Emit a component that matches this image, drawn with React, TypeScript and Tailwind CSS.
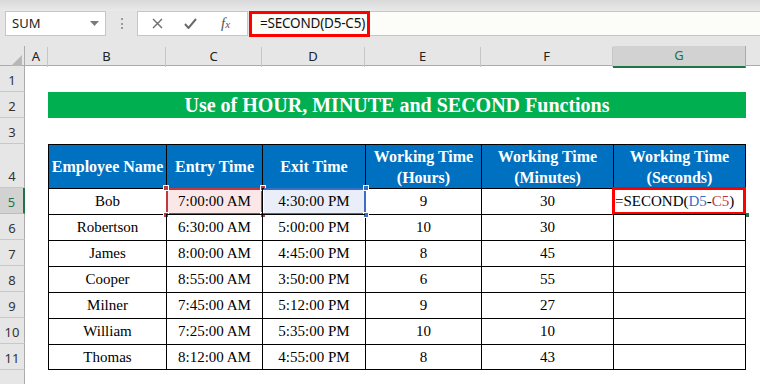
import React from "react";

const cols = "grid grid-cols-[25px_23px_118px_96px_103px_116px_132px_133px_14px]";
const ui = { fontFamily: '"Noto Sans", "Open Sans", sans-serif' };
const serif = { fontFamily: '"Liberation Serif", "Times New Roman", serif' };

const data = [
  ["Bob", "7:00:00 AM", "4:30:00 PM", "9", "30"],
  ["Robertson", "6:30:00 AM", "5:00:00 PM", "10", "30"],
  ["James", "8:00:00 AM", "4:45:00 PM", "8", "45"],
  ["Cooper", "8:55:00 AM", "3:50:00 PM", "6", "55"],
  ["Milner", "7:45:00 AM", "5:12:00 PM", "9", "27"],
  ["William", "7:25:00 AM", "5:35:00 PM", "10", "10"],
  ["Thomas", "8:12:00 AM", "4:55:00 PM", "8", "43"],
];

const RowHead = ({ n, active }: { n?: number; active?: boolean }) => (
  <div
    className={
      active
        ? "flex items-end justify-center pb-[1px] bg-[#d2d2d2] text-[#217346] border-b border-[#bdbdbd] border-r-2 border-r-[#217346] text-[13px]"
        : "flex items-end justify-center pb-[1px] bg-[#e6e6e6] text-[#333] border-b border-[#c8c8c8] border-r border-r-[#ababab] text-[13px]"
    }
    style={ui}
  >
    {n}
  </div>
);

const Handle = ({ pos, color }: { pos: string; color: string }) => (
  <span className={`absolute w-[6px] h-[6px] border border-white ${pos} ${color}`} />
);

const Toolbar = () => (
  <div className="h-[46px] bg-[#e6e6e6] relative" style={ui}>
    <div className="h-[11px] bg-gradient-to-b from-[#d9d9d9] to-[#e9e9e9]" />
    <div className="flex h-[25px] items-stretch">
      <div className="ml-[5px] w-[101px] bg-white border border-[#c6c6c6] flex items-center justify-between pl-[6px] pr-[6px] text-[13px] text-[#222]">
        <span>SUM</span>
        <svg width="9" height="5" viewBox="0 0 9 5">
          <path d="M0 0h9L4.5 5z" fill="#7a7a7a" />
        </svg>
      </div>
      <div className="w-[31px] flex flex-col items-center justify-center gap-[2.5px]">
        <span className="w-[2px] h-[2px] bg-[#9a9a9a]" />
        <span className="w-[2px] h-[2px] bg-[#9a9a9a]" />
        <span className="w-[2px] h-[2px] bg-[#9a9a9a]" />
      </div>
      <div className="w-[111px] bg-white border border-[#c6c6c6] flex items-center">
        <svg className="ml-[14px]" width="11" height="11" viewBox="0 0 11 11">
          <path d="M1 1l9 9M10 1l-9 9" stroke="#6b6b6b" strokeWidth="1.4" />
        </svg>
        <svg className="ml-[21px]" width="13" height="11" viewBox="0 0 13 11">
          <path d="M1 6l3.5 4L12 1" stroke="#6b6b6b" strokeWidth="2" fill="none" />
        </svg>
        <span className="ml-[24px] italic text-[15px] text-[#555] leading-none" style={serif}>
          f<span className="text-[11px]">x</span>
        </span>
      </div>
      <div className="flex-1 ml-[3px] bg-[#fcfcf8] border-y border-[#c6c6c6] relative">
        <div className="absolute left-[-2px] top-[-1px] w-[121px] h-[26px] border-[3px] border-[#ff0000]" />
        <div className="pl-[9px] h-full flex items-center text-[13.5px] tracking-[-0.2px] text-[#111]">=SECOND(D5-C5)</div>
      </div>
    </div>
  </div>
);

const ColHeads = () => {
  const letters = ["A", "B", "C", "D", "E", "F", "G"];
  return (
    <div className={`${cols} h-[20px] bg-[#e6e6e6] border-b border-[#ababab]`} style={ui}>
      <div className="relative border-r border-[#ababab]">
        <svg className="absolute right-[2px] bottom-[2px]" width="11" height="11" viewBox="0 0 11 11">
          <path d="M11 0v11H0z" fill="#b7b7b7" />
        </svg>
      </div>
      {letters.map((l) =>
        l === "G" ? (
          <div
            key={l}
            className="flex items-center justify-center bg-[#d2d2d2] text-[#217346] text-[13px] border-b-2 border-[#217346] border-r border-r-[#ababab]"
          >
            {l}
          </div>
        ) : (
          <div key={l} className="flex items-center justify-center text-[#222] text-[13px] border-r border-[#c6c6c6] my-[1px]">
            {l}
          </div>
        )
      )}
      <div />
    </div>
  );
};

export default function App() {
  const cellBase = "flex items-center justify-center border-l border-t border-black text-[15px] text-black leading-tight";
  return (
    <div className="w-[760px] h-[384px] overflow-hidden bg-white">
      <Toolbar />
      <ColHeads />

      {/* row 1 */}
      <div className={`${cols} h-[26px]`}>
        <RowHead n={1} />
      </div>

      {/* row 2 title */}
      <div className={`${cols} h-[26px]`}>
        <RowHead n={2} />
        <div />
        <div
          className="col-span-6 bg-[#00b050] text-white font-bold text-[20px] leading-none flex items-center justify-center"
          style={serif}
        >
          Use of HOUR, MINUTE and SECOND Functions
        </div>
      </div>

      {/* row 3 */}
      <div className={`${cols} h-[26px]`}>
        <RowHead n={3} />
      </div>

      {/* row 4 header */}
      <div className={`${cols} h-[44px]`}>
        <RowHead n={4} />
        <div />
        {[
          "Employee Name",
          "Entry Time",
          "Exit Time",
          "Working Time (Hours)",
          "Working Time (Minutes)",
          "Working Time (Seconds)",
        ].map((h, i) => (
          <div
            key={h}
            className={`${cellBase} bg-[#0070c0] text-white font-bold text-center text-[16px] px-[2px] ${i === 5 ? "border-r" : ""}`}
            style={serif}
          >
            {h.includes("(") ? (
              <span className="leading-[21px]">
                Working Time
                <br />
                {h.slice(h.indexOf("("))}
              </span>
            ) : (
              h
            )}
          </div>
        ))}
      </div>

      {data.map((r, idx) => {
        const first = idx === 0;
        const last = idx === data.length - 1;
        const bb = last ? "border-b" : "";
        return (
          <div key={r[0]} className={`${cols} h-[26px]`}>
            <RowHead n={idx + 5} active={first} />
            <div />
            <div className={`${cellBase} ${bb}`} style={serif}>{r[0]}</div>
            <div className={`${cellBase} ${bb} relative`} style={serif}>
              {first && (
                <>
                  <div className="absolute -left-[1px] -top-[1px] -right-[1px] -bottom-[1px] border-2 border-[#c0393f] bg-[#fbe7e8]" />
                  <Handle pos="-left-[4px] -top-[4px]" color="bg-[#c0393f]" />
                  <Handle pos="-right-[4px] -top-[4px]" color="bg-[#c0393f]" />
                  <Handle pos="-left-[4px] -bottom-[4px]" color="bg-[#c0393f]" />
                  <Handle pos="-right-[4px] -bottom-[4px]" color="bg-[#c0393f]" />
                </>
              )}
              <span className="relative">{r[1]}</span>
            </div>
            <div className={`${cellBase} ${bb} relative`} style={serif}>
              {first && (
                <>
                  <div className="absolute left-[1px] -top-[1px] -right-[1px] -bottom-[1px] border-2 border-l-0 border-[#3b6fc6] bg-[#e9eef8]" />
                  <Handle pos="-right-[4px] -top-[4px]" color="bg-[#3b6fc6]" />
                  <Handle pos="-right-[4px] -bottom-[4px]" color="bg-[#3b6fc6]" />
                </>
              )}
              <span className="relative">{r[2]}</span>
            </div>
            <div className={`${cellBase} ${bb}`} style={serif}>{r[3]}</div>
            <div className={`${cellBase} ${bb}`} style={serif}>{r[4]}</div>
            <div className={`${cellBase} ${bb} border-r relative justify-start`} style={serif}>
              {first && (
                <>
                  <div className="absolute -left-[2px] -top-[2px] -right-[1px] -bottom-[1px] border-[3px] border-[#ff0000]" />
                  <span className="absolute -right-[4px] -bottom-[3px] w-[4px] h-[4px] bg-[#217346]" />
                  <span className="relative pl-[1px]">
                    =SECOND(<span className="text-[#3b6fc6]">D5</span>-<span className="text-[#c0393f]">C5</span>)
                  </span>
                </>
              )}
            </div>
          </div>
        );
      })}

      {/* row 12 (cut off by the window) */}
      <div className={`${cols} h-[26px]`}>
        <RowHead />
      </div>
    </div>
  );
}
